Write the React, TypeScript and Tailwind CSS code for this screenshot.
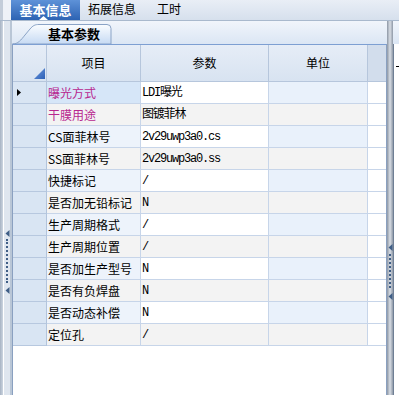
import React from 'react';

type Row = { name: string; value: string; pink?: boolean };

const rows: Row[] = [
  { name: '曝光方式', value: 'LDI曝光', pink: true },
  { name: '干膜用途', value: '图镀菲林', pink: true },
  { name: 'CS面菲林号', value: '2v29uwp3a0.cs' },
  { name: 'SS面菲林号', value: '2v29uwp3a0.ss' },
  { name: '快捷标记', value: '/' },
  { name: '是否加无铅标记', value: 'N' },
  { name: '生产周期格式', value: '/' },
  { name: '生产周期位置', value: '/' },
  { name: '是否加生产型号', value: 'N' },
  { name: '是否有负焊盘', value: 'N' },
  { name: '是否动态补偿', value: 'N' },
  { name: '定位孔', value: '/' }
];

const cjk = "font-['Noto_Sans_CJK_SC',sans-serif]";
const mono = "font-['Liberation_Mono','Noto_Sans_CJK_SC',monospace]";

function LeftArrow() {
  return (
    <svg width="5" height="7" viewBox="0 0 5 7">
      <path d="M4.5 0 L0.5 3.5 L4.5 7 Z" fill="#3f5e86" />
    </svg>
  );
}

function Dots({ height }: { height: number }) {
  return (
    <div
      className="w-[2px] border-l-2 border-dotted border-[#3f5e86]"
      style={{ height }}
    />
  );
}

export default function App() {
  return (
    <div className={`w-[399px] h-[395px] overflow-hidden flex flex-col bg-white ${cjk}`}>
      {/* top tabs */}
      <div className="h-[21px] shrink-0 flex items-stretch border-b border-[#a9b9cd] bg-gradient-to-b from-[#e9eef6] to-[#d6e0ed]">
        <div className="w-[11px] border-l-[3px] border-[#c3cdd9] bg-[#eef2f7]" />
        <div className="relative w-[69px] flex justify-center items-start bg-gradient-to-b from-[#5e92d8] to-[#2d63b3] text-white font-bold text-[13px] leading-[19px]">
          <span className="whitespace-nowrap">基本信息</span>
          <svg className="absolute left-[28px] bottom-0" width="9" height="4" viewBox="0 0 9 4">
            <path d="M0 4 L4.5 0 L9 4 Z" fill="#ffffff" />
          </svg>
        </div>
        <div className="ml-[8px] text-[12px] leading-[18px] text-black whitespace-nowrap">拓展信息</div>
        <div className="ml-[21px] text-[12px] leading-[18px] text-black whitespace-nowrap">工时</div>
      </div>

      {/* body */}
      <div className="flex-1 flex">
        {/* left splitter */}
        <div className="w-[12px] flex">
          <div className="w-[3px] bg-gradient-to-r from-[#a7b3c3] to-[#cdd6e1]" />
          <div className="w-[1px] bg-white" />
          <div className="w-[6px] bg-[#dfe6ef] flex flex-col items-center pt-[209px]">
            <LeftArrow />
            <div className="mt-[2px]">
              <Dots height={44} />
            </div>
            <div className="mt-[4px]">
              <LeftArrow />
            </div>
          </div>
          <div className="w-[2px] bg-[#b9c6d6]" />
        </div>

        {/* main column */}
        <div className="w-[375px] flex flex-col">
          {/* sub tab strip */}
          <div className="relative h-[23px] shrink-0 bg-gradient-to-b from-[#f1f5fb] to-[#dbe6f4]">
            <svg className="absolute left-0 top-0" width="104" height="23" viewBox="0 0 104 23">
              <defs>
                <linearGradient id="tabg" x1="0" y1="0" x2="0" y2="1">
                  <stop offset="0" stopColor="#fbfdff" />
                  <stop offset="1" stopColor="#c6daf3" />
                </linearGradient>
              </defs>
              <path
                d="M0.5 23 C6 23 9 19 13 14 L18 8 C21 4.5 23 3.5 27 3.5 L95 3.5 Q99 3.5 99 7.5 L99 23 Z"
                fill="url(#tabg)"
                stroke="#8aa3c6"
              />
            </svg>
            <div className="absolute left-[36px] top-[3px] text-[13px] leading-[19px] font-bold text-black whitespace-nowrap">基本参数</div>
          </div>

          {/* grid */}
          <div className="flex-1 bg-white border-t border-l border-r border-t-[#7d9fd2] border-l-[#8aa0c0] border-r-[#8aa0c0]">
            <div className="grid grid-cols-[34px_94px_128px_99px_18px]">
              {/* header */}
              <div className="relative h-[37px] border-r border-b border-[#b6c6dc] bg-gradient-to-b from-[#e6edf7] to-[#d8e3f1] flex items-end justify-end pr-[1px] pb-[2px]">
                <svg width="11" height="11" viewBox="0 0 11 11">
                  <defs>
                    <linearGradient id="trig" x1="0" y1="0" x2="1" y2="1">
                      <stop offset="0" stopColor="#6e9be0" />
                      <stop offset="1" stopColor="#2d5fb5" />
                    </linearGradient>
                  </defs>
                  <path d="M11 0 L11 11 L0 11 Z" fill="url(#trig)" />
                </svg>
              </div>
              <div className="h-[37px] border-r border-b border-[#b6c6dc] bg-gradient-to-b from-[#e6edf7] to-[#d8e3f1] flex items-center justify-center text-[12px] text-black">项目</div>
              <div className="h-[37px] border-r border-b border-[#b6c6dc] bg-gradient-to-b from-[#e6edf7] to-[#d8e3f1] flex items-center justify-center text-[12px] text-black">参数</div>
              <div className="h-[37px] border-r border-b border-[#b6c6dc] bg-gradient-to-b from-[#e6edf7] to-[#d8e3f1] flex items-center justify-center text-[12px] text-black">单位</div>
              <div className="h-[37px] border-b border-[#b6c6dc] bg-[#d2ddec]" />

              {rows.map((row, i) => {
                const even = i % 2 === 1;
                const gray = 'bg-[#f3f3f3]';
                return (
                  <React.Fragment key={row.name}>
                    <div className="h-[22px] border-r border-b border-r-[#b2c4dc] border-b-[#b7c8df] bg-[#d9e5f3] flex items-center pl-[4px]">
                      {i === 0 && (
                        <svg width="4" height="7" viewBox="0 0 4 7">
                          <path d="M0 0 L4 3.5 L0 7 Z" fill="#000000" />
                        </svg>
                      )}
                    </div>
                    <div
                      className={`h-[22px] border-r border-b border-[#c7d5e9] flex items-center pl-[1px] text-[12px] whitespace-nowrap ${
                        i === 0 ? 'bg-[#d6e6f8]' : even ? gray : 'bg-[#edf3fb]'
                      } ${row.pink ? 'text-[#b8278f]' : 'text-black'}`}
                    >
                      {row.name}
                    </div>
                    <div
                      className={`h-[22px] border-r border-b border-[#c7d5e9] flex items-center pl-[1px] text-[12px] text-black whitespace-nowrap ${mono} tracking-[-1.2px] ${
                        even ? gray : 'bg-white'
                      }`}
                    >
                      {row.value}
                    </div>
                    <div className={`h-[22px] border-r border-b border-[#c7d5e9] ${even ? gray : 'bg-[#e9f1fb]'}`} />
                    <div className="h-[22px] border-b border-[#c7d5e9] bg-white" />
                  </React.Fragment>
                );
              })}
            </div>
          </div>
        </div>

        {/* right splitter */}
        <div className="w-[6px] bg-gradient-to-r from-[#8d97a5] via-[#d9dee5] to-[#8f99a7] flex flex-col items-center pt-[223px]">
          <LeftArrow />
          <div className="mt-[3px]">
            <Dots height={34} />
          </div>
          <div className="mt-[5px]">
            <LeftArrow />
          </div>
        </div>

        {/* right panel */}
        <div className="w-[6px] flex flex-col">
          <div className="h-[23px] bg-gradient-to-b from-[#f1f5fb] to-[#dbe6f4]" />
          <div className="flex-1 border-l border-[#6f7f95] bg-white pt-[22px] pl-[2px]">
            <div className="w-[3px] h-[1px] bg-black" />
          </div>
        </div>
      </div>
    </div>
  );
}
